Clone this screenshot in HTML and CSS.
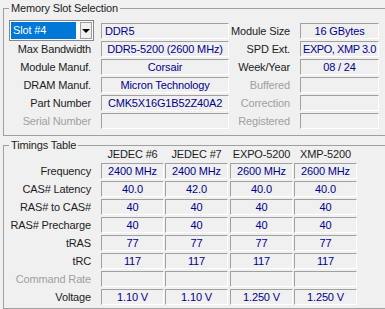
FILE: index.html
```html
<!DOCTYPE html>
<html lang="en">
<head>
    <meta charset="UTF-8">
    <meta name="viewport" content="width=device-width, initial-scale=1.0">
    <title>SPD - Memory Slot</title>
    <link rel="stylesheet" href="styles.css">
</head>
<body>
    <div class="spd-tab">
        <fieldset class="group slot-group">
            <legend>Memory Slot Selection</legend>
            <div class="slot-grid">
                <div class="combo">
                    <span class="combo-value">Slot #4</span>
                    <span class="combo-btn"><span class="arrow"></span></span>
                </div>
                <div class="field field-left">DDR5</div>
                <div class="label">Module Size</div>
                <div class="field">16 GBytes</div>

                <div class="label">Max Bandwidth</div>
                <div class="field">DDR5-5200 (2600 MHz)</div>
                <div class="label">SPD Ext.</div>
                <div class="field field-tight">EXPO, XMP 3.0</div>

                <div class="label">Module Manuf.</div>
                <div class="field">Corsair</div>
                <div class="label">Week/Year</div>
                <div class="field">08 / 24</div>

                <div class="label">DRAM Manuf.</div>
                <div class="field">Micron Technology</div>
                <div class="label disabled">Buffered</div>
                <div class="field"></div>

                <div class="label">Part Number</div>
                <div class="field">CMK5X16G1B52Z40A2</div>
                <div class="label disabled">Correction</div>
                <div class="field"></div>

                <div class="label disabled">Serial Number</div>
                <div class="field"></div>
                <div class="label disabled">Registered</div>
                <div class="field"></div>
            </div>
        </fieldset>

        <fieldset class="group timings-group">
            <legend>Timings Table</legend>
            <div class="timings-grid">
                <div></div>
                <div class="col-head">JEDEC #6</div>
                <div class="col-head">JEDEC #7</div>
                <div class="col-head">EXPO-5200</div>
                <div class="col-head">XMP-5200</div>

                <div class="label">Frequency</div>
                <div class="field">2400 MHz</div>
                <div class="field">2400 MHz</div>
                <div class="field">2600 MHz</div>
                <div class="field">2600 MHz</div>

                <div class="label">CAS# Latency</div>
                <div class="field">40.0</div>
                <div class="field">42.0</div>
                <div class="field">40.0</div>
                <div class="field">40.0</div>

                <div class="label">RAS# to CAS#</div>
                <div class="field">40</div>
                <div class="field">40</div>
                <div class="field">40</div>
                <div class="field">40</div>

                <div class="label">RAS# Precharge</div>
                <div class="field">40</div>
                <div class="field">40</div>
                <div class="field">40</div>
                <div class="field">40</div>

                <div class="label">tRAS</div>
                <div class="field">77</div>
                <div class="field">77</div>
                <div class="field">77</div>
                <div class="field">77</div>

                <div class="label">tRC</div>
                <div class="field">117</div>
                <div class="field">117</div>
                <div class="field">117</div>
                <div class="field">117</div>

                <div class="label disabled">Command Rate</div>
                <div class="field"></div>
                <div class="field"></div>
                <div class="field"></div>
                <div class="field"></div>

                <div class="label">Voltage</div>
                <div class="field">1.10 V</div>
                <div class="field">1.10 V</div>
                <div class="field">1.250 V</div>
                <div class="field">1.250 V</div>
            </div>
        </fieldset>
    </div>
</body>
</html>
```

FILE: styles.css
```css
body {
    margin: 0;
    background-color: #f0f0f0;
    font-family: 'Liberation Sans', Arial, sans-serif;
    font-size: 11px;
    letter-spacing: -0.15px;
    color: #1c1c1c;
    overflow: hidden;
}
.spd-tab {
    width: 385px;
    height: 309px;
    overflow: hidden;
}
.group {
    min-width: 0;
    margin: 0 -20px 0 3px;
    border: 1px solid #a0a0a0;
}
.group legend {
    padding: 0 2px;
    line-height: 9px;
    color: #1c1c1c;
}
.slot-group {
    margin-top: 4px;
    padding: 10px 0 6px 5px;
}
.timings-group {
    margin-top: 5px;
    padding: 0 0 3px 5px;
}
.slot-grid {
    display: grid;
    grid-template-columns: 92px 128px 71px 79px;
    grid-auto-rows: 16px;
    row-gap: 2px;
}
.timings-grid {
    display: grid;
    grid-template-columns: 92px 64px 65px 64px 63px;
    grid-template-rows: 14px;
    grid-auto-rows: 16px;
    row-gap: 2px;
    margin-top: -3px;
}
.label {
    padding-right: 10px;
    text-align: right;
    line-height: 16px;
    white-space: nowrap;
}
.label.disabled {
    color: #a0a0a0;
}
.field {
    box-sizing: border-box;
    height: 16px;
    border: 1px solid;
    border-color: #a0a0a0 #fff #fff #a0a0a0;
    line-height: 14px;
    text-align: center;
    color: #000090;
    white-space: nowrap;
    overflow: hidden;
}
.field-left {
    text-align: left;
    padding-left: 3px;
}
.field-tight {
    letter-spacing: -0.45px;
}
.timings-grid .field,
.col-head {
    width: 63px;
}
.col-head {
    text-align: center;
    line-height: 14px;
    white-space: nowrap;
}
.combo {
    box-sizing: border-box;
    display: flex;
    width: 85px;
    height: 21px;
    margin: -3px 0 -2px;
    padding: 1px;
    border: 1px solid #828790;
    background-color: #fff;
}
.combo-value {
    width: 65px;
    padding-left: 2px;
    box-sizing: border-box;
    background-color: #0078d7;
    color: #fff;
    line-height: 17px;
}
.combo-btn {
    box-sizing: border-box;
    display: flex;
    align-items: center;
    justify-content: center;
    width: 12px;
    margin-left: auto;
    border: 1px solid #a0a0a0;
    background-color: #f0f0f0;
}
.arrow {
    width: 0;
    height: 0;
    border-left: 4px solid transparent;
    border-right: 4px solid transparent;
    border-top: 4px solid #000;
}
```
